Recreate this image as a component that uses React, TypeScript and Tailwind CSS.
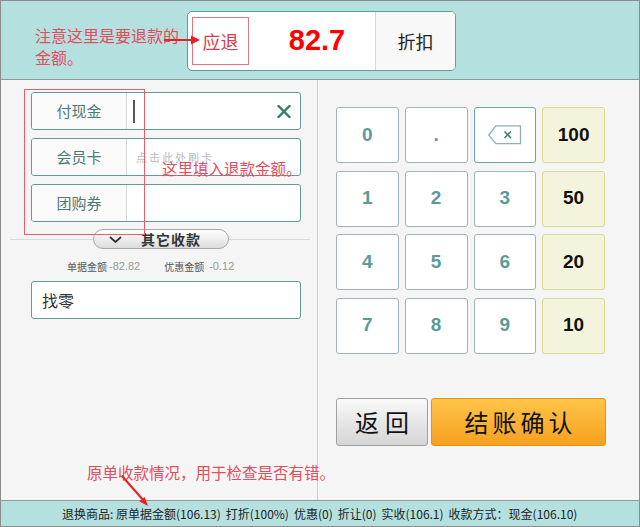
import React from "react";

const cjk = "font-['Noto_Sans_CJK_SC','Liberation_Sans',sans-serif]";
const arial = "font-['Liberation_Sans','Noto_Sans_CJK_SC',sans-serif]";

function LabeledInput({ label, children }: { label: string; children?: React.ReactNode }) {
  return (
    <div className="flex h-[38px] w-[270px] rounded-[3px] border border-[#5f9d94] bg-white overflow-hidden">
      <div className="w-[95px] shrink-0 flex items-center justify-center text-[15px] text-[#4b7a74] bg-[#fafafa] border-r border-[#d6d6d6]">
        {label}
      </div>
      <div className="flex-1 relative flex items-center">{children}</div>
    </div>
  );
}

function Key({ children, kind = "num" }: { children: React.ReactNode; kind?: "num" | "yellow" | "back" }) {
  const base = "h-[56px] rounded-[3px] border flex items-center justify-center text-[19px] font-bold " + arial;
  if (kind === "yellow") return <div className={base + " bg-[#f4f4dc] border-[#d9d98e] text-[#111]"}>{children}</div>;
  if (kind === "back") return <div className={base + " bg-white border-[#6aa6a5]"}>{children}</div>;
  return <div className={base + " bg-white border-[#9cb6b6] text-[#5c9a99]"}>{children}</div>;
}

export default function App() {
  return (
    <div className={"relative w-[640px] h-[527px] border border-[#8c8c8c] flex flex-col overflow-hidden bg-[#f5f5f5] " + cjk}>
      {/* Header */}
      <header className="h-[79px] shrink-0 bg-[#b4e0df] border-b border-[#8e9a9a] pl-[186px] pt-[10px]">
        <div className="flex w-[269px] h-[60px] rounded-[5px] border border-[#5d9e95] bg-white overflow-hidden">
          <div className="flex-1 flex items-center pl-[4px]">
            <div className="w-[57px] h-[48px] border border-[#e07884] flex items-center justify-center text-[18px] text-[#d8404f]">
              应退
            </div>
            <div className={"flex-1 text-center pl-[10px] text-[29px] font-bold text-[#ff0000] " + arial}>82.7</div>
          </div>
          <div className="w-[80px] border-l border-[#d8d8d8] bg-[#f8f8f8] flex items-center justify-center text-[18px] text-[#222]">
            折扣
          </div>
        </div>
      </header>

      {/* Main */}
      <main className="flex flex-1 min-h-0">
        <section className="w-[317px] shrink-0 border-r border-[#cfcfcf] pt-[12px] flex flex-col">
          <div className="ml-[30px] flex flex-col gap-2">
            <LabeledInput label="付现金">
              <div className="ml-[6px] w-[1.5px] h-[23px] bg-[#555]" />
              <svg className="absolute right-[9px] top-[12px]" width="14" height="13" viewBox="0 0 14 13">
                <path d="M1.5 1 L12.5 12 M12.5 1 L1.5 12" stroke="#2f7e6c" strokeWidth="2.4" strokeLinecap="round" />
              </svg>
            </LabeledInput>
            <LabeledInput label="会员卡">
              <span className="ml-[9px] text-[11px] tracking-[2px] text-[#bbbbbb]">点击此处刷卡</span>
            </LabeledInput>
            <LabeledInput label="团购券" />
          </div>

          {/* pill row */}
          <div className="ml-[9px] mt-[7px] w-[300px] h-[20px] flex items-center">
            <div className="w-[83px] h-px bg-[#d3dcdc]" />
            <div className="w-[136px] h-[20px] rounded-full border border-[#a8a8a8] bg-linear-to-b from-[#ffffff] to-[#dcdcdc] flex items-center pl-[15px]">
              <svg width="13" height="7" viewBox="0 0 13 7">
                <polyline points="1,1 6.5,6 12,1" fill="none" stroke="#333" strokeWidth="1.8" />
              </svg>
              <span className="ml-[19px] text-[14px] leading-none font-semibold tracking-[1px] text-[#333]">其它收款</span>
            </div>
            <div className="flex-1 h-px bg-[#d3dcdc]" />
          </div>

          {/* info row */}
          <div className="ml-[66px] mt-[10px] h-[14px] flex items-center whitespace-nowrap">
            <span className="text-[10px] text-[#555]">单据金额</span>
            <span className={"ml-[2px] text-[11px] text-[#999] " + arial}>-82.82</span>
            <span className="ml-[24px] text-[10px] text-[#555]">优惠金额</span>
            <span className={"ml-[5px] text-[11px] text-[#999] " + arial}>-0.12</span>
          </div>

          {/* change */}
          <div className="ml-[30px] mt-[8px] w-[270px] h-[38px] rounded-[3px] border border-[#5f9d94] bg-white flex items-center pl-[10px] text-[16px] text-[#333]">
            找零
          </div>
        </section>

        <section className="flex-1 pl-[18px] pt-[27px] flex flex-col">
          <div className="w-[269px] grid grid-cols-4 gap-x-[6px] gap-y-[7.5px]">
            <Key>0</Key>
            <Key>.</Key>
            <Key kind="back">
              <svg width="34" height="20" viewBox="0 0 34 20">
                <polygon points="0.8,10 7.8,0.8 32.5,0.8 32.5,18.7 7.8,18.7" fill="none" stroke="#8fb0b0" strokeWidth="1.3" />
                <path d="M16.5 6.5 L23 13 M23 6.5 L16.5 13" stroke="#3f7f7e" strokeWidth="1.6" />
              </svg>
            </Key>
            <Key kind="yellow">100</Key>
            <Key>1</Key>
            <Key>2</Key>
            <Key>3</Key>
            <Key kind="yellow">50</Key>
            <Key>4</Key>
            <Key>5</Key>
            <Key>6</Key>
            <Key kind="yellow">20</Key>
            <Key>7</Key>
            <Key>8</Key>
            <Key>9</Key>
            <Key kind="yellow">10</Key>
          </div>

          <div className="mt-[44px] flex gap-[3px]">
            <div className="w-[92px] h-[48px] rounded-[3px] border border-[#a0a0a0] bg-linear-to-b from-[#f9f9f9] to-[#d5d5d5] flex items-center justify-center pl-[6px] text-[24px] tracking-[6px] text-[#111]">
              返回
            </div>
            <div className="w-[175px] h-[48px] rounded-[3px] border border-[#dc9420] bg-linear-to-b from-[#ffc548] to-[#f6a01c] flex items-center justify-center pl-[4px] text-[24px] tracking-[4px] text-[#111]">
              结账确认
            </div>
          </div>
        </section>
      </main>

      {/* Status bar */}
      <footer className="h-[26px] shrink-0 bg-[#b4e0df] border-t border-[#8e9a9a] pl-[61px] flex items-center gap-[5px] text-[12px] text-[#222] whitespace-nowrap">
        <span>退换商品: 原单据金额(106.13)</span>
        <span>打折(100%)</span>
        <span>优惠(0)</span>
        <span>折让(0)</span>
        <span>实收(106.1)</span>
        <span>收款方式：现金(106.10)</span>
      </footer>

      {/* Annotations */}
      <div className="absolute left-[34px] top-[23px] text-[16px] leading-[22px] text-[#e24c5c]">
        注意这里是要退款的
        <br />
        金额。
      </div>
      <svg className="absolute left-[161px] top-[33px]" width="40" height="12" viewBox="0 0 40 12">
        <line x1="2" y1="6" x2="31" y2="6" stroke="#e82020" strokeWidth="2" />
        <polygon points="29,1.5 38,6 29,10.5" fill="#e82020" />
      </svg>
      <div className="absolute left-[23px] top-[88px] w-[121px] h-[146px] border-[1.5px] border-[#e2606b]" />
      <div className="absolute left-[161px] top-[157px] text-[15.5px] leading-[20px] text-[#e24c5c] whitespace-nowrap">
        这里填入退款金额。
      </div>
      <div className="absolute left-[86px] top-[461px] text-[15.5px] leading-[20px] text-[#e24c5c] whitespace-nowrap">
        原单收款情况，用于检查是否有错。
      </div>
      <svg className="absolute left-[117px] top-[469px]" width="36" height="40" viewBox="0 0 36 40">
        <line x1="4" y1="6" x2="26" y2="31" stroke="#e82020" strokeWidth="2" />
        <polygon points="30,36 21.4,31.6 26.6,27" fill="#e82020" />
      </svg>
    </div>
  );
}
